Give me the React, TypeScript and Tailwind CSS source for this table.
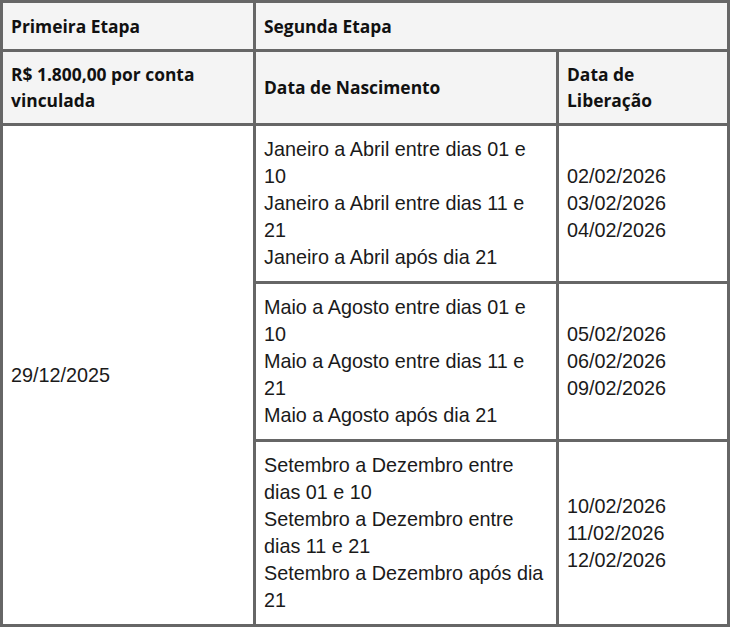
const ROWS = [
  {
    periods: ['Janeiro a Abril entre dias 01 e 10', 'Janeiro a Abril entre dias 11 e 21', 'Janeiro a Abril após dia 21'],
    dates: ['02/02/2026', '03/02/2026', '04/02/2026'],
  },
  {
    periods: ['Maio a Agosto entre dias 01 e 10', 'Maio a Agosto entre dias 11 e 21', 'Maio a Agosto após dia 21'],
    dates: ['05/02/2026', '06/02/2026', '09/02/2026'],
  },
  {
    periods: ['Setembro a Dezembro entre dias 01 e 10', 'Setembro a Dezembro entre dias 11 e 21', 'Setembro a Dezembro após dia 21'],
    dates: ['10/02/2026', '11/02/2026', '12/02/2026'],
  },
];

const head = "bg-[#f4f4f4] px-[8px] py-[10px] font-['Open_Sans',sans-serif] font-bold text-[17.4px] text-[#111] flex items-center";
const body = "bg-white px-[8px] py-[10px] font-['Liberation_Sans',Arial,sans-serif] text-[19.8px] leading-[27px] text-[#1a1a1a]";

export default function App() {
  return (
    <div className="bg-white w-[732px] h-[628px]">
      <div className="grid grid-cols-[250px_300px_168px] gap-[3px] p-[3px] bg-[#666] w-[730px]">
        <div className={`${head} leading-[26px]`}>Primeira Etapa</div>
        <div className={`${head} leading-[26px] col-span-2`}>Segunda Etapa</div>

        <div className={`${head} leading-[25.5px]`}>R$ 1.800,00 por conta vinculada</div>
        <div className={`${head} leading-[25.5px]`}>Data de Nascimento</div>
        <div className={`${head} leading-[25.5px]`}>Data de Liberação</div>

        <div className={`${body} row-span-3 flex items-center`}>29/12/2025</div>
        {ROWS.map((r, i) => (
          <div key={i} className="contents">
            <div className={body}>
              {r.periods.map((p) => (
                <div key={p}>{p}</div>
              ))}
            </div>
            <div className={`${body} flex flex-col justify-center`}>
              {r.dates.map((d) => (
                <div key={d}>{d}</div>
              ))}
            </div>
          </div>
        ))}
      </div>
    </div>
  );
}
